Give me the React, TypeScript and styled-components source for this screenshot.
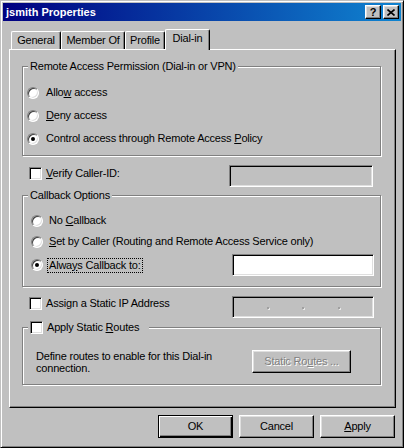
import React from 'react';
import styled, { createGlobalStyle } from 'styled-components';

const Global = createGlobalStyle`
  html, body { margin: 0; padding: 0; background: #c0c0c0; }
  body {
    font-family: "Liberation Sans", Arial, sans-serif;
    font-size: 11px;
    letter-spacing: -0.2px;
    color: #000;
  }
`;

const Window = styled.div`
  width: 404px;
  height: 448px;
  box-sizing: border-box;
  background: #c0c0c0;
  border: 1px solid;
  border-color: #c0c0c0 #000 #000 #c0c0c0;
  box-shadow: inset 1px 1px 0 #fff, inset -1px -1px 0 #808080;
  padding: 2px;
  display: flex;
  flex-direction: column;
`;

const TitleBar = styled.div`
  height: 18px;
  flex: none;
  display: flex;
  align-items: center;
  padding: 0 2px 0 3px;
  background: linear-gradient(to right, #000080, #1084d0);
`;

const TitleText = styled.div`
  flex: 1;
  color: #fff;
  font-weight: bold;
  font-size: 11px;
  letter-spacing: 0;
  line-height: 18px;
`;

const CaptionButton = styled.div<{ $gap?: boolean }>`
  width: 16px;
  height: 14px;
  box-sizing: border-box;
  margin-left: ${p => (p.$gap ? '2px' : '0')};
  background: #c0c0c0;
  border: 1px solid;
  border-color: #fff #000 #000 #fff;
  box-shadow: inset -1px -1px 0 #808080, inset 1px 1px 0 #dfdfdf;
  display: flex;
  align-items: center;
  justify-content: center;
  font-weight: bold;
  font-size: 11px;
  line-height: 12px;
  letter-spacing: 0;
`;

const TabStrip = styled.div`
  display: flex;
  align-items: flex-end;
  height: 20px;
  margin: 8px 0 0 8px;
  flex: none;
`;

const Tab = styled.div<{ $w: number; $active?: boolean }>`
  width: ${p => p.$w}px;
  height: ${p => (p.$active ? 21 : 18)}px;
  margin-bottom: ${p => (p.$active ? -1 : 0)}px;
  position: relative;
  z-index: ${p => (p.$active ? 2 : 1)};
  box-sizing: border-box;
  background: #c0c0c0;
  border-top: 1px solid #fff;
  border-left: 1px solid #fff;
  border-right: 1px solid #000;
  border-radius: 2px 2px 0 0;
  box-shadow: inset -1px 0 0 #808080;
  display: flex;
  justify-content: center;
  padding-top: 2px;
  line-height: 13px;
`;

const Panel = styled.div`
  margin-left: 6px;
  width: 387px;
  height: 359px;
  box-sizing: border-box;
  flex: none;
  border: 1px solid;
  border-color: #fff #000 #000 #fff;
  box-shadow: inset -1px -1px 0 #808080;
  padding: 16px 14px 0 12px;
  display: flex;
  flex-direction: column;
`;

const Group = styled.div<{ $pt: number; $pl: number; $pb: number; $pr?: number; $mt?: number }>`
  position: relative;
  border: 1px solid #808080;
  box-shadow: 1px 1px 0 #fff, inset 1px 1px 0 #fff;
  padding: ${p => p.$pt}px ${p => p.$pr ?? 0}px ${p => p.$pb}px ${p => p.$pl}px;
  margin-top: ${p => p.$mt ?? 0}px;
  display: flex;
  flex-direction: column;
`;

const Legend = styled.div<{ $pr?: number }>`
  position: absolute;
  top: -7px;
  left: 5px;
  height: 13px;
  line-height: 13px;
  padding: 0 ${p => p.$pr ?? 2}px 0 2px;
  background: #c0c0c0;
  display: flex;
  align-items: center;
`;

const Row = styled.div<{ $h: number; $mt?: number; $ml?: number; $mr?: number; $top?: boolean }>`
  display: flex;
  align-items: ${p => (p.$top ? 'flex-start' : 'center')};
  height: ${p => p.$h}px;
  margin-top: ${p => p.$mt ?? 0}px;
  margin-left: ${p => p.$ml ?? 0}px;
  margin-right: ${p => p.$mr ?? 0}px;
  flex: none;
`;

const CheckItem = styled.div<{ $mt: number }>`
  display: flex;
  align-items: center;
  height: 13px;
  margin-top: ${p => p.$mt}px;
`;

const RadioCircle = styled.span<{ $checked?: boolean }>`
  width: 12px;
  height: 12px;
  box-sizing: border-box;
  border-radius: 50%;
  background: #fff;
  border: 1px solid;
  border-color: #808080 #fff #fff #808080;
  box-shadow: inset 1px 1px 0 #404040, inset -1px -1px 0 #dfdfdf;
  display: flex;
  align-items: center;
  justify-content: center;
  flex: none;
  &::after {
    content: '';
    width: 4px;
    height: 4px;
    border-radius: 50%;
    background: #000;
    display: ${p => (p.$checked ? 'block' : 'none')};
  }
`;

const CheckBox = styled.span`
  width: 13px;
  height: 13px;
  box-sizing: border-box;
  background: #fff;
  border: 1px solid;
  border-color: #808080 #fff #fff #808080;
  box-shadow: inset 1px 1px 0 #000, inset -1px -1px 0 #dfdfdf;
  flex: none;
`;

const Label = styled.span<{ $gap: number; $focus?: boolean }>`
  margin-left: ${p => (p.$focus ? p.$gap - 1 : p.$gap)}px;
  line-height: 13px;
  white-space: nowrap;
  outline: ${p => (p.$focus ? '1px dotted #000' : 'none')};
  padding: ${p => (p.$focus ? '0 1px' : '0')};
`;

const Key = styled.span`
  text-decoration: underline;
  text-underline-offset: 1px;
`;

const Field = styled.div<{ $w: number; $disabled?: boolean }>`
  width: ${p => p.$w}px;
  height: 22px;
  box-sizing: border-box;
  margin-left: auto;
  flex: none;
  background: ${p => (p.$disabled ? '#c0c0c0' : '#fff')};
  border: 1px solid;
  border-color: #808080 #fff #fff #808080;
  box-shadow: inset 1px 1px 0 #000, inset -1px -1px 0 #dfdfdf;
  display: flex;
  align-items: center;
`;

const IPSeg = styled.div`
  flex: 1;
`;

const IPDot = styled.div`
  width: 2px;
  height: 2px;
  margin-top: 2px;
  background: #a0a0a0;
  box-shadow: 1px 1px 0 #e8e8e8;
  flex: none;
`;

const Description = styled.div`
  flex: 1;
  line-height: 12px;
  padding-top: 2px;
`;

const Button = styled.div<{ $w: number; $default?: boolean; $disabled?: boolean }>`
  width: ${p => p.$w}px;
  height: 23px;
  box-sizing: border-box;
  flex: none;
  background: #c0c0c0;
  border: 1px solid;
  border-color: ${p => (p.$default ? '#000' : '#fff #000 #000 #fff')};
  box-shadow: ${p =>
    p.$default
      ? 'inset 1px 1px 0 #fff, inset -1px -1px 0 #000, inset -2px -2px 0 #808080'
      : 'inset -1px -1px 0 #808080, inset 1px 1px 0 #dfdfdf'};
  display: flex;
  align-items: center;
  justify-content: center;
  line-height: 13px;
  color: ${p => (p.$disabled ? '#808080' : '#000')};
  text-shadow: ${p => (p.$disabled ? '1px 1px 0 #fff' : 'none')};
`;

const ButtonRow = styled.div`
  display: flex;
  justify-content: flex-end;
  gap: 6px;
  margin: 7px 6px 0 0;
`;

const RoutesRow = styled.div`
  display: flex;
  align-items: center;
  margin-right: 29px;
`;

export default function App() {
  return (
    <>
      <Global />
      <Window>
        <TitleBar>
          <TitleText>jsmith Properties</TitleText>
          <CaptionButton>?</CaptionButton>
          <CaptionButton $gap>
            <svg width="8" height="7" viewBox="0 0 8 7">
              <path d="M0.5 0.5 L7.5 6.5 M7.5 0.5 L0.5 6.5" stroke="#000" strokeWidth="1.6" />
            </svg>
          </CaptionButton>
        </TitleBar>

        <TabStrip>
          <Tab $w={50}>General</Tab>
          <Tab $w={64}>Member Of</Tab>
          <Tab $w={40}>Profile</Tab>
          <Tab $w={45} $active>Dial-in</Tab>
        </TabStrip>

        <Panel>
          <Group $pt={14} $pl={4} $pb={5}>
            <Legend>Remote Access Permission (Dial-in or VPN)</Legend>
            <Row $h={23}>
              <RadioCircle />
              <Label $gap={7}>Allo<Key>w</Key> access</Label>
            </Row>
            <Row $h={23}>
              <RadioCircle />
              <Label $gap={7}><Key>D</Key>eny access</Label>
            </Row>
            <Row $h={23}>
              <RadioCircle $checked />
              <Label $gap={7}>Control access through Remote Access <Key>P</Key>olicy</Label>
            </Row>
          </Group>

          <Row $h={22} $mt={9} $ml={7} $mr={8} $top>
            <CheckItem $mt={2}>
              <CheckBox />
              <Label $gap={4}><Key>V</Key>erify Caller-ID:</Label>
            </CheckItem>
            <Field $w={144} $disabled />
          </Row>

          <Group $pt={14} $pl={8} $pb={10} $pr={6} $mt={8}>
            <Legend>Callback Options</Legend>
            <Row $h={21}>
              <RadioCircle />
              <Label $gap={6}>No <Key>C</Key>allback</Label>
            </Row>
            <Row $h={21}>
              <RadioCircle />
              <Label $gap={6}><Key>S</Key>et by Caller (Routing and Remote Access Service only)</Label>
            </Row>
            <Row $h={22} $mt={2}>
              <RadioCircle $checked />
              <Label $gap={6} $focus>Alwa<Key>y</Key>s Callback to:</Label>
              <Field $w={142} />
            </Row>
          </Group>

          <Row $h={22} $mt={9} $ml={7} $mr={7} $top>
            <CheckItem $mt={1}>
              <CheckBox />
              <Label $gap={4}>Assign a Static IP Address</Label>
            </CheckItem>
            <Field $w={142} $disabled>
              <IPSeg />
              <IPDot />
              <IPSeg />
              <IPDot />
              <IPSeg />
              <IPDot />
              <IPSeg />
            </Field>
          </Row>

          <Group $pt={20} $pl={13} $pb={10} $mt={9}>
            <Legend $pr={10}>
              <CheckBox />
              <Label $gap={4}>Apply Static <Key>R</Key>outes</Label>
            </Legend>
            <RoutesRow>
              <Description>
                Define routes to enable for this Dial-in
                <br />
                connection.
              </Description>
              <Button $w={99} $disabled>Static Ro<Key>u</Key>tes ...</Button>
            </RoutesRow>
          </Group>
        </Panel>

        <ButtonRow>
          <Button $w={75} $default>OK</Button>
          <Button $w={75}>Cancel</Button>
          <Button $w={75}><Key>A</Key>pply</Button>
        </ButtonRow>
      </Window>
    </>
  );
}
